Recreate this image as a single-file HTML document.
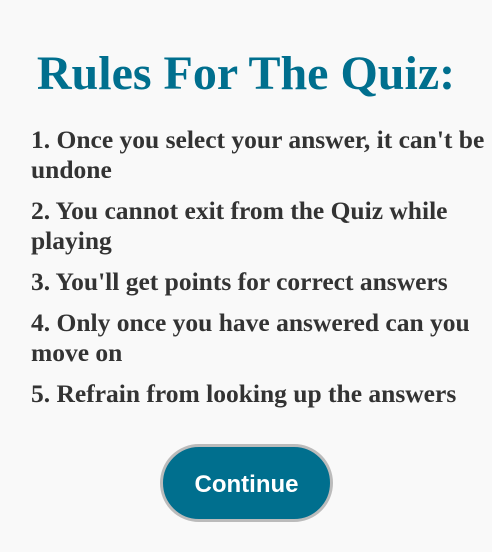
<!DOCTYPE html>
<html><head><style>
html,body{margin:0;padding:0;background:#f9f9f9;width:492px;height:552px;overflow:hidden}
h1{font-family:"Liberation Serif",serif;font-weight:bold;font-size:48px;color:#006f8e;margin:0;position:absolute;top:46px;left:0;width:492px;text-align:center;line-height:56px}
ul{list-style:none;margin:0;padding:0;position:absolute;left:31px;top:125px;width:460px;font-family:"Liberation Serif",serif;font-weight:bold;font-size:25.5px;color:#333;line-height:30px}
li{margin-bottom:11px}
.btn{position:absolute;left:160px;top:444px;width:167px;height:72px;border:3px solid #bbb;border-radius:40px;background:#006f8e;color:#fff;font-family:"Liberation Sans",sans-serif;font-weight:bold;font-size:24px;text-align:center;line-height:76px}
</style></head><body>
<h1>Rules For The Quiz:</h1>
<ul>
<li>1. Once you select your answer, it can't be undone</li>
<li>2. You cannot exit from the Quiz while playing</li>
<li>3. You'll get points for correct answers</li>
<li>4. Only once you have answered can you move on</li>
<li>5. Refrain from looking up the answers</li>
</ul>
<div class="btn">Continue</div>
</body></html>
